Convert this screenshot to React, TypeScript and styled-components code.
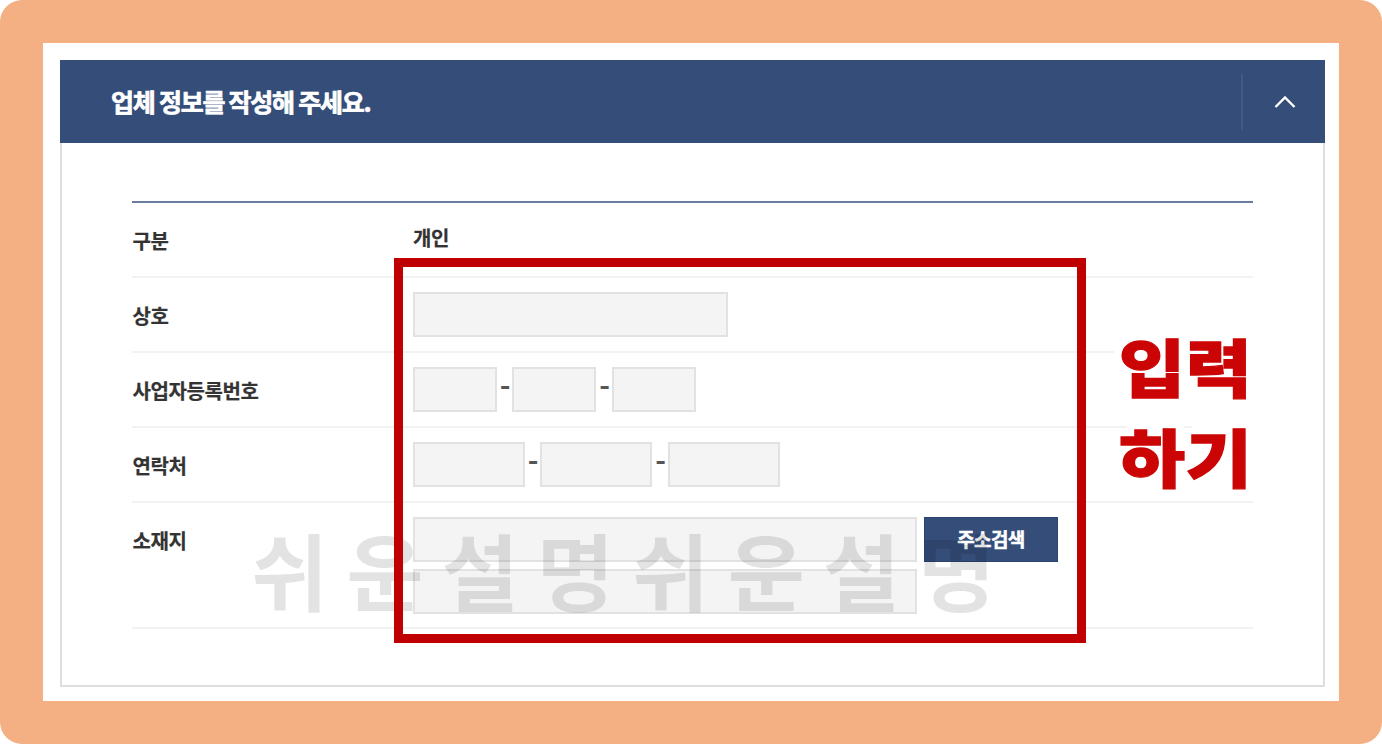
import React from "react";
import styled, { createGlobalStyle } from "styled-components";

interface FieldRow {
  label: string;
  text?: string;
  widths?: number[];
  gaps?: number[];
}

const rows: FieldRow[] = [
  { label: "구분", text: "개인" },
  { label: "상호", widths: [315], gaps: [] },
  { label: "사업자등록번호", widths: [84, 84, 84], gaps: [15, 16] },
  { label: "연락처", widths: [112, 112, 112], gaps: [15, 16] },
];

export default function App() {
  return (
    <>
      <GlobalStyle />
      <Frame>
        <Paper>
          <Card>
            <CardHeader>
              <Title>업체 정보를 작성해 주세요.</Title>
              <Toggle aria-label="접기">
                <svg width="22" height="14" viewBox="0 0 22 14" fill="none">
                  <path d="M1.5 12 L11 2.4 L20.5 12" stroke="#fff" strokeWidth="2.3" />
                </svg>
              </Toggle>
            </CardHeader>
            <Table>
              {rows.map((row) => (
                <Row key={row.label}>
                  <Label>{row.label}</Label>
                  {row.text && <Value>{row.text}</Value>}
                  {row.widths && (
                    <Fields>
                      {row.widths.map((w, i) => (
                        <React.Fragment key={i}>
                          {i > 0 && <Dash $width={row.gaps![i - 1]}>-</Dash>}
                          <Input $width={w} readOnly />
                        </React.Fragment>
                      ))}
                    </Fields>
                  )}
                </Row>
              ))}
              <Row $height={126}>
                <Label>소재지</Label>
                <Address>
                  <Fields>
                    <Input $width={504} readOnly />
                    <SearchButton>주소검색</SearchButton>
                  </Fields>
                  <Input $width={504} readOnly />
                </Address>
              </Row>
            </Table>
          </Card>
        </Paper>
        <Watermark>쉬운설명쉬운설명</Watermark>
        <Highlight />
        <Callout>
          <span>입력</span>
          <span>하기</span>
        </Callout>
      </Frame>
    </>
  );
}

//  styling
const GlobalStyle = createGlobalStyle`
  * {
    box-sizing: border-box;
  }
  body {
    margin: 0;
    background: #fff;
    font-family: "Noto Sans CJK KR", "Noto Sans", sans-serif;
  }
`;

const Frame = styled.div`
  position: relative;
  width: 1382px;
  height: 744px;
  padding: 43px;
  background: #f4b083;
  border-radius: 22px;
  overflow: hidden;
`;

const Paper = styled.div`
  width: 1296px;
  height: 658px;
  padding: 17px 14px 14px 17px;
  background: #fff;
`;

const Card = styled.section`
  height: 627px;
  border: 2px solid #dedede;
  border-top: none;
`;

const CardHeader = styled.header`
  display: flex;
  align-items: center;
  justify-content: space-between;
  height: 83px;
  margin: 0 -2px;
  padding-left: 51px;
  background: #344d79;
`;

const Title = styled.h1`
  margin: 0;
  padding-bottom: 2px;
  color: #fff;
  font-size: 25px;
  font-weight: 700;
  line-height: 36px;
  letter-spacing: -1.25px;
  -webkit-text-stroke: 0.7px #fff;
`;

const Toggle = styled.button`
  display: flex;
  align-items: center;
  justify-content: center;
  width: 84px;
  height: 56px;
  padding: 0 0 0 1px;
  border: none;
  border-left: 2px solid #435a84;
  background: none;
`;

const Table = styled.div`
  width: 1121px;
  margin: 58px 0 0 70px;
  border-top: 2px solid #6a7da0;
`;

const Row = styled.div<{ $height?: number }>`
  display: flex;
  height: ${(p) => p.$height || 75}px;
  padding-top: 14px;
  border-bottom: 2px solid #f2f2f2;
`;

const Label = styled.div`
  width: 281px;
  padding-top: 9px;
  color: #333;
  font-size: 20px;
  font-weight: 700;
  line-height: 30px;
  letter-spacing: -0.4px;
  text-indent: 0.5px;
  -webkit-text-stroke: 0.2px #333;
`;

const Value = styled(Label)`
  padding-top: 6px;
  text-indent: 0;
`;

const Fields = styled.div`
  display: flex;
`;

const Address = styled.div`
  display: flex;
  flex-direction: column;
  gap: 7px;
`;

const Input = styled.input<{ $width: number }>`
  width: ${(p) => p.$width}px;
  height: 45px;
  padding: 0 10px;
  border: 2px solid #e2e2e2;
  border-radius: 0;
  background: #f4f4f4;
  outline: none;
`;

const Dash = styled.span<{ $width: number }>`
  display: flex;
  justify-content: center;
  width: ${(p) => p.$width}px;
  padding-left: 1px;
  color: #555;
  font-size: 29px;
  font-weight: 700;
  line-height: 33px;
`;

const SearchButton = styled.button`
  width: 134px;
  height: 45px;
  margin-left: 7px;
  padding: 0 0 3px;
  border: 1px solid #2b4471;
  background: #344d79;
  color: #fff;
  font-family: inherit;
  font-size: 19px;
  font-weight: 700;
  letter-spacing: -0.6px;
  -webkit-text-stroke: 0.5px #fff;
`;

const Watermark = styled.div`
  position: absolute;
  left: 251px;
  top: 505px;
  color: rgba(0, 0, 0, 0.11);
  font-size: 84px;
  font-weight: 700;
  line-height: 128px;
  letter-spacing: 18px;
  white-space: nowrap;
`;

const Highlight = styled.div`
  position: absolute;
  left: 394px;
  top: 258px;
  width: 692px;
  height: 385px;
  border: 9px solid #c00000;
`;

const Callout = styled.div`
  position: absolute;
  left: 1119px;
  top: 320px;
  display: flex;
  flex-direction: column;
  color: #cb0505;
  font-size: 63px;
  font-weight: 900;
  line-height: 90px;
  letter-spacing: 0.5px;
  white-space: nowrap;
  transform: scaleX(1.14);
  transform-origin: left top;
  -webkit-text-stroke: 1.3px #cb0505;
  text-shadow:
    8px 0 #fff,
    -7px 0 #fff,
    0 9px #fff,
    0 -9px #fff,
    8px -5px #fff,
    -7px -4px #fff,
    4px -4px #fff,
    -4px -4px #fff,
    5px 6px #fff,
    -5px 6px #fff;
`;
